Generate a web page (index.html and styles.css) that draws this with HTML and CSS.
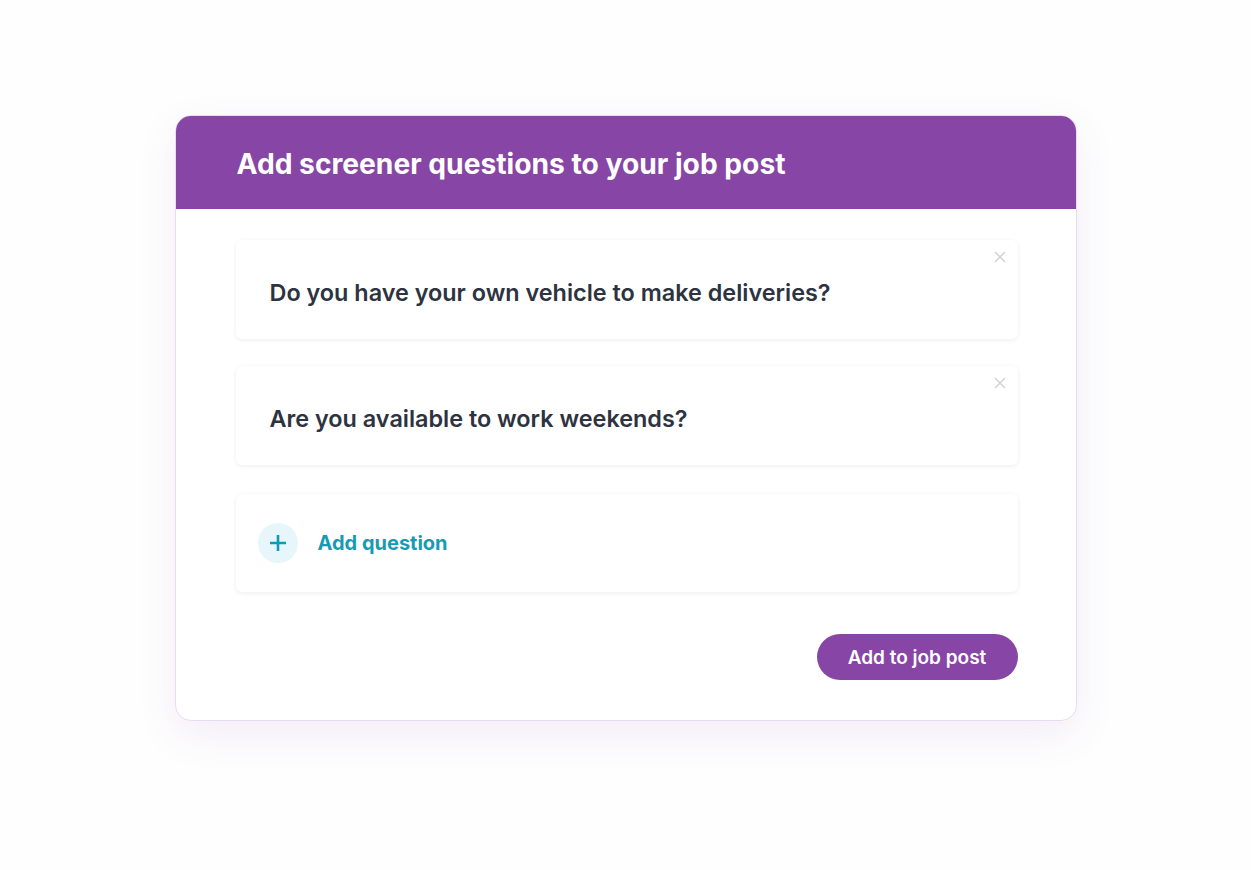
FILE: index.html
```html
<html>

<head>
	<link rel="stylesheet" href="styles.css">
</head>

<body>
	<div class="modal">
		<div class="modal-head">
			<h1>Add screener questions to your job post</h1>
		</div>
		<div class="modal-body">
			<div class="question">
				<p>Do you have your own vehicle to make deliveries?</p>
				<span class="close">
					<svg width="12" height="12" viewBox="0 0 12 12"><path d="M1 1L11 11M11 1L1 11" stroke="#d4d4d8" stroke-width="1.6" fill="none" /></svg>
				</span>
			</div>
			<div class="question">
				<p>Are you available to work weekends?</p>
				<span class="close">
					<svg width="12" height="12" viewBox="0 0 12 12"><path d="M1 1L11 11M11 1L1 11" stroke="#d4d4d8" stroke-width="1.6" fill="none" /></svg>
				</span>
			</div>
			<div class="question add">
				<span class="plus">
					<svg width="20" height="20" viewBox="0 0 20 20"><path d="M10 2V18M2 10H18" stroke="#0f9bb5" stroke-width="2.6" fill="none" /></svg>
				</span>
				<span class="add-label">Add question</span>
			</div>
			<div class="actions">
				<button class="btn">Add to job post</button>
			</div>
		</div>
	</div>
</body>

</html>
```

FILE: styles.css
```css
html, body {
	margin: 0;
	padding: 0;
	background: #fefefe;
	font-family: Inter, "Noto Sans", sans-serif;
}

body {
	padding-top: 115px;
}
/* The white card with purple header */

.modal {
	width: 900px;
	margin: 0 auto;
	background: #ffffff;
	border: 1px solid #eadcf0;
	border-radius: 16px;
	box-shadow: 0 14px 40px rgba(135, 70, 165, 0.09);
	overflow: hidden;
}

.modal-head {
	background: #8746a5;
	height: 93px;
	display: flex;
	align-items: center;
	padding-left: 61px;
}

.modal-head h1 {
	margin: 0;
	color: #ffffff;
	font-size: 28.2px;
	font-weight: 700;
	line-height: 34px;
	padding-top: 2px;
}

.modal-body {
	padding: 31px 58px 40px 60px;
	display: flex;
	flex-direction: column;
	gap: 27px;
}
/* One question row */

.question {
	position: relative;
	height: 99px;
	box-sizing: border-box;
	border-radius: 6px;
	background: #ffffff;
	box-shadow: 0 1px 4px rgba(30, 30, 60, 0.08);
	display: flex;
	align-items: center;
	padding: 6px 34px 0;
}

.question p {
	margin: 0;
	color: #2d3340;
	font-size: 23.4px;
	font-weight: 600;
	line-height: 28px;
}

.close {
	position: absolute;
	top: 11px;
	right: 12px;
	display: flex;
}

.question.add {
	height: 98px;
	margin-top: 2px;
	padding: 0 22px;
	gap: 20px;
}

.plus {
	width: 40px;
	height: 40px;
	border-radius: 50%;
	background: #e6f6fb;
	display: flex;
	align-items: center;
	justify-content: center;
}

.add-label {
	color: #169ab5;
	font-size: 20px;
	font-weight: 700;
}

.actions {
	display: flex;
	justify-content: flex-end;
	padding-top: 15px;
}

.btn {
	width: 201px;
	height: 46px;
	border: none;
	border-radius: 23px;
	background: #8746a5;
	color: #ffffff;
	font-family: Inter, "Noto Sans", sans-serif;
	font-size: 19px;
	font-weight: 600;
	cursor: pointer;
}
```
